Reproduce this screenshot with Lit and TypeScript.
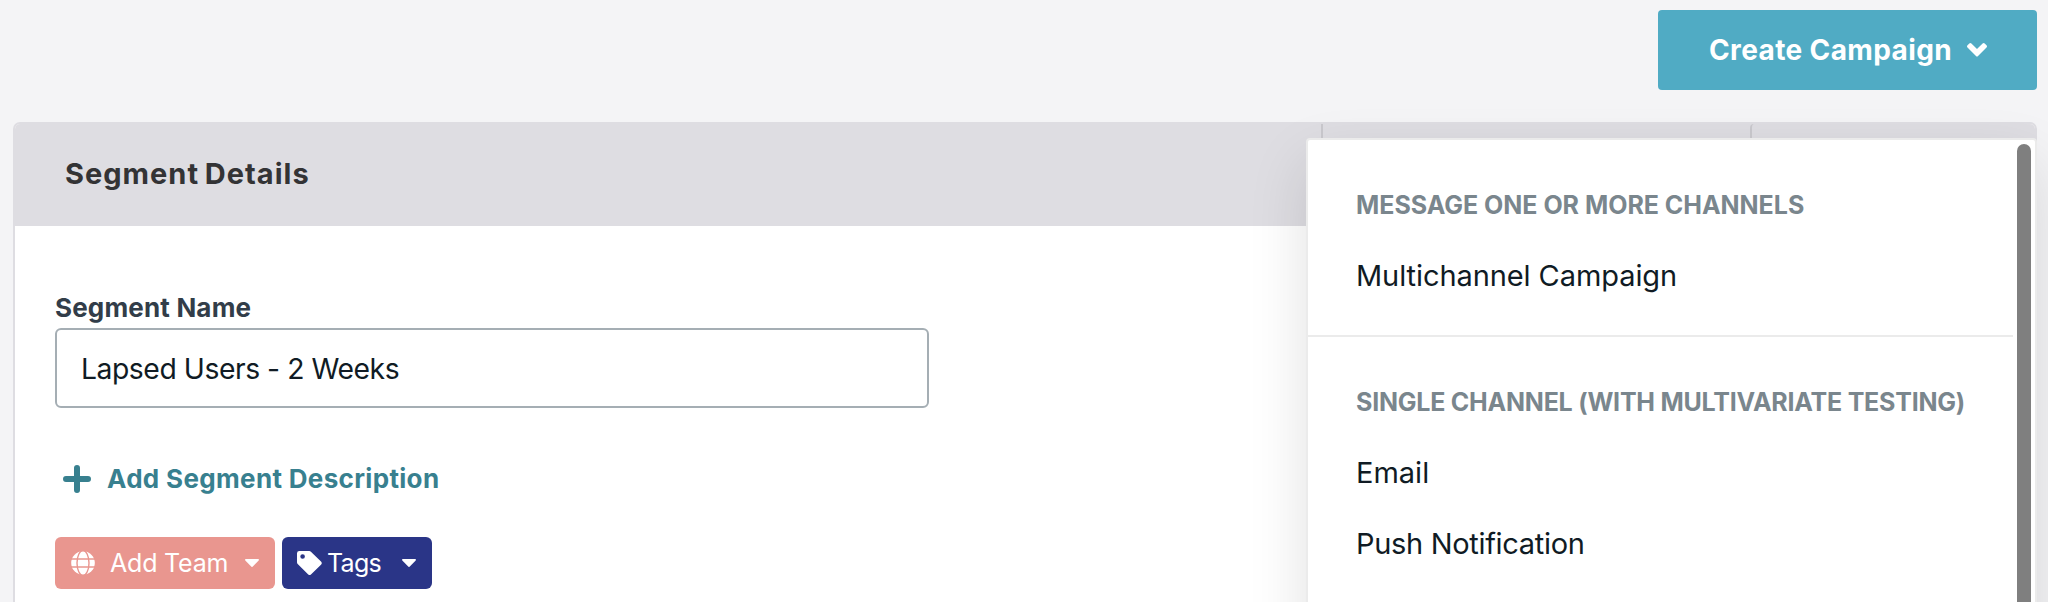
import { LitElement, html, css } from "lit";
import { customElement, property } from "lit/decorators.js";

@customElement("campaign-menu")
class CampaignMenu extends LitElement {
  @property({ attribute: false }) groups: { title: string; tone: string; items: { label: string; tone: string }[] }[] = [];

  static styles = css`
    :host {
      display: flex;
      box-sizing: border-box;
      width: 731px;
      height: 900px;
      background: #fff;
      border: 2px solid #ebebeb;
      border-radius: 4px;
      box-shadow: 0 24px 60px rgba(0, 0, 0, 0.12);
      overflow: hidden;
    }
    .list { flex: 1; min-width: 0; }
    .group { padding: 30px 0 24px; border-bottom: 2px solid #ebebeb; }
    .title, .item { padding-left: 48px; white-space: nowrap; }
    .title { font-size: 25px; font-weight: 700; line-height: 70px; color: #7a868d; }
    .title.wide { letter-spacing: -0.03px; }
    .title.tight { letter-spacing: -0.23px; }
    .item { font-size: 29px; line-height: 71px; color: #101b24; }
    .item.campaign { letter-spacing: -0.08px; }
    .item.email { letter-spacing: 0; }
    .item.push { letter-spacing: -0.32px; }
    .track { width: 22px; padding: 4px; box-sizing: border-box; }
    .thumb { width: 14px; height: 640px; border-radius: 7px; background: #7f7f7f; }
  `;

  render() {
    return html`
      <div class="list">
        ${this.groups.map((g) => html`
          <div class="group">
            <div class="title ${g.tone}">${g.title}</div>
            ${g.items.map((i) => html`<div class="item ${i.tone}">${i.label}</div>`)}
          </div>`)}
      </div>
      <div class="track"><div class="thumb"></div></div>
    `;
  }
}

@customElement("app-root")
class AppRoot extends LitElement {
  private groups = [
    {
      title: "MESSAGE ONE OR MORE CHANNELS",
      tone: "wide",
      items: [{ label: "Multichannel Campaign", tone: "campaign" }],
    },
    {
      title: "SINGLE CHANNEL (WITH MULTIVARIATE TESTING)",
      tone: "tight",
      items: [
        { label: "Email", tone: "email" },
        { label: "Push Notification", tone: "push" },
      ],
    },
  ];

  static styles = css`
    :host {
      display: block;
      height: 602px;
      overflow: hidden;
      background: #f4f4f6;
      font-family: Inter, "Liberation Sans", sans-serif;
    }
    * { box-sizing: border-box; }
    svg { display: block; flex: none; }
    .page { padding: 10px 11px 0 13px; }
    .toolbar { display: flex; justify-content: flex-end; position: relative; z-index: 2; }
    .create {
      display: flex; align-items: center;
      width: 379px; height: 80px; padding: 0 50px 0 51px;
      border: 0; border-radius: 4px;
      background: #50abc4; color: #fff;
      font: 700 28px/34px Inter, sans-serif; letter-spacing: 0.38px;
      justify-content: space-between; white-space: nowrap;
    }
    .menu { position: absolute; right: 0; top: 128px; }
    .card {
      margin-top: 32px; height: 700px;
      background: #fff; border: 2px solid #dedde2; border-radius: 7px;
    }
    .head { display: flex; height: 102px; background: #dedde2; border-radius: 5px 5px 0 0; }
    .cell { border-left: 2px solid #c9c8cd; }
    .cell.first {
      flex: 1; border-left: 0; padding-left: 50px;
      font-size: 29px; font-weight: 700; line-height: 100px;
      letter-spacing: 1px; word-spacing: -2px; color: #333335;
    }
    .cell.mid { width: 429px; }
    .cell.last { width: 285px; border-top-left-radius: 4px; }
    .body { display: flex; flex-direction: column; align-items: flex-start; padding: 66px 40px 0; }
    .label { font-size: 26px; font-weight: 700; line-height: 31px; letter-spacing: 0.17px; color: #323d49; margin-bottom: 5px; }
    .input {
      width: 874px; height: 80px; padding: 2px 24px 0;
      border: 2px solid #a5aeb4; border-radius: 6px; background: #fff;
      font: 400 28.3px/34px Inter, sans-serif; letter-spacing: -0.45px; color: #101b24;
      outline: none;
    }
    .describe {
      display: flex; align-items: center; gap: 16px; margin-top: 55px; padding-left: 8px;
      font-size: 26px; font-weight: 700; line-height: 32px; letter-spacing: 0.33px; color: #38808f;
    }
    .chips { display: flex; gap: 7px; margin-top: 42px; }
    .chip {
      display: flex; align-items: center; height: 52px; border-radius: 6px;
      color: #fff; font-size: 25px; line-height: 30px; letter-spacing: -0.2px; white-space: nowrap;
    }
    .team { width: 220px; padding: 0 16px; background: #e9968f; }
    .team span { margin-left: 15px; flex: 1; }
    .tags { width: 150px; padding: 0 16px 0 15px; background: #2a3587; letter-spacing: -0.7px; }
    .tags span { margin-left: 5px; flex: 1; }
  `;

  private caret() {
    return html`<svg width="14" height="8" viewBox="0 0 14 8"><path d="M.9 0h12.2c.8 0 1.2.9.6 1.4L7.8 7.6a1.1 1.1 0 0 1-1.6 0L.3 1.4C-.3.9.1 0 .9 0z" fill="#fff"/></svg>`;
  }

  render() {
    return html`
      <div class="page">
        <div class="toolbar">
          <button class="create">
            Create Campaign
            <svg width="20" height="14" viewBox="0 0 20 14"><path fill="#fff" d="M.5 4.400a1.500 1.500 0 0 1 0-2.100L2.300.6a1.500 1.500 0 0 1 2.100 0L10 6.100 15.600.6a1.500 1.500 0 0 1 2.100 0l1.800 1.700a1.500 1.500 0 0 1 0 2.100l-9 9a.8.8 0 0 1-1 0z"/></svg>
          </button>
          <campaign-menu class="menu" .groups=${this.groups}></campaign-menu>
        </div>
        <div class="card">
          <div class="head">
            <div class="cell first">Segment Details</div>
            <div class="cell mid"></div>
            <div class="cell last"></div>
          </div>
          <div class="body">
            <label class="label">Segment Name</label>
            <input class="input" .value=${"Lapsed Users - 2 Weeks"} />
            <div class="describe">
              <svg width="28" height="28" viewBox="0 0 28 28"><path d="M14 3v22M3 14h22" stroke="#38808f" stroke-width="6" stroke-linecap="round"/></svg>
              <span>Add Segment Description</span>
            </div>
            <div class="chips">
              <div class="chip team">
                <svg width="24" height="24" viewBox="0 0 24 24">
                  <circle cx="12" cy="12" r="11.8" fill="#fff"/>
                  <g fill="none" stroke="#e9968f" stroke-width="1.4"><ellipse cx="12" cy="12" rx="6" ry="12.4"/><path d="M0 8h24M0 16h24"/></g>
                </svg>
                <span>Add Team</span>
                ${this.caret()}
              </div>
              <div class="chip tags">
                <svg width="25" height="24" viewBox="0 0 25 24"><path fill="#fff" fill-rule="evenodd" d="M0 2.2v9.1c0 .7.2 1.200.7 1.700l10.300 10.300a2.300 2.300 0 0 0 3.200 0l9.800-9.600a2.200 2.200 0 0 0 0-3.100L13.900.7A2.300 2.300 0 0 0 12.200 0H2.300A2.300 2.300 0 0 0 0 2.200zM5.600 3.200a2.300 2.300 0 1 1 0 4.600 2.300 2.300 0 0 1 0-4.600z"/></svg>
                <span>Tags</span>
                ${this.caret()}
              </div>
            </div>
          </div>
        </div>
      </div>
    `;
  }
}
